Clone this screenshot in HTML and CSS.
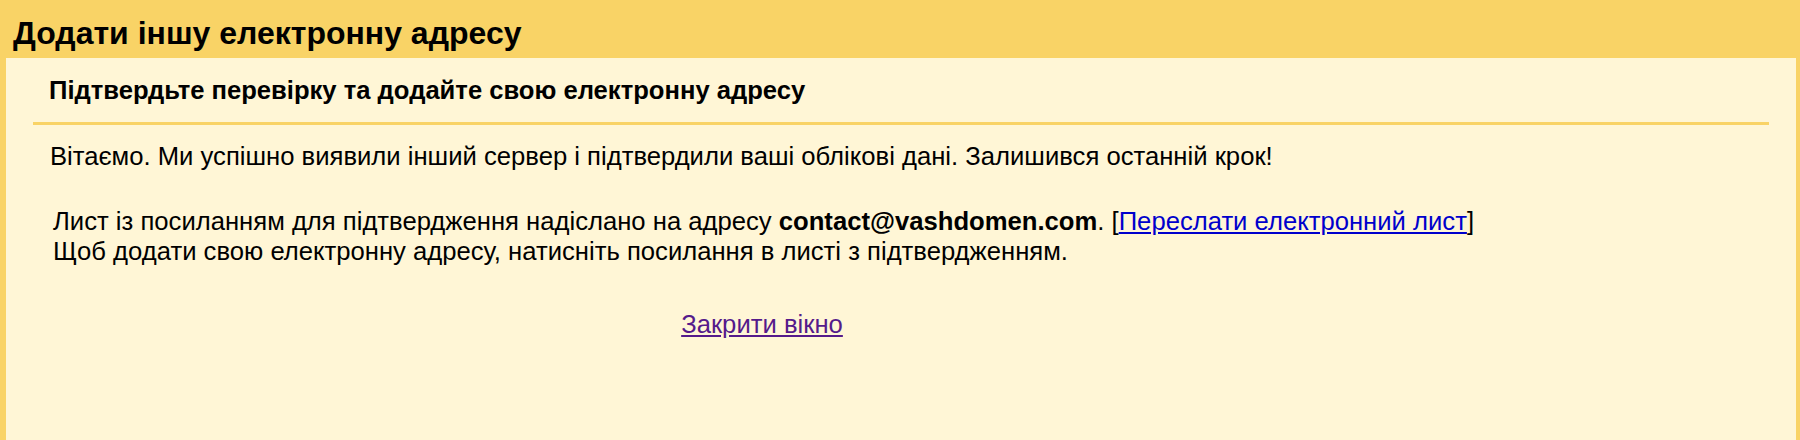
FILE: index.html
```html
<!DOCTYPE html>
<html lang="uk">
<head>
<meta charset="utf-8">
<title>Додати іншу електронну адресу</title>
<link rel="stylesheet" href="styles.css">
</head>
<body>
<div class="header">
  <h1 class="title">Додати іншу електронну адресу</h1>
</div>
<div class="panel">
  <h2 class="subtitle">Підтвердьте перевірку та додайте свою електронну адресу</h2>
  <div class="separator"></div>
  <div class="content">
    <p class="intro">Вітаємо. Ми успішно виявили інший сервер і підтвердили ваші облікові дані. Залишився останній крок!</p>
    <p class="details">Лист із посиланням для підтвердження надіслано на адресу <b>contact@vashdomen.com</b>. [<a class="resend" href="#">Переслати електронний лист</a>]<br>Щоб додати свою електронну адресу, натисніть посилання в листі з підтвердженням.</p>
    <div class="close-row"><a class="close" href="#">Закрити вікно</a></div>
  </div>
</div>
</body>
</html>
```

FILE: styles.css
```css
html, body {
  margin: 0;
  padding: 0;
}
body {
  background: #f9d366;
  font-family: "Liberation Sans", Arial, sans-serif;
  color: #000;
  width: 1800px;
  height: 440px;
  overflow: hidden;
  display: flex;
  flex-direction: column;
}
.header {
  height: 58px;
  box-sizing: border-box;
  padding: 13px 0 0 13px;
}
.title {
  margin: 0;
  font-size: 32px;
  line-height: 40px;
  font-weight: bold;
}
.panel {
  flex: 1;
  margin: 0 4px 0 6px;
  background: #fff6d6;
  padding-top: 18px;
}
.subtitle {
  margin: 0 0 18px 43px;
  font-size: 25.6px;
  line-height: 28px;
  font-weight: bold;
}
.separator {
  height: 3px;
  background: #f9d366;
  margin: 0 27px;
}
.content {
  width: fit-content;
  margin: 17px 0 0 44px;
  font-size: 25.65px;
}
.intro {
  margin: 0;
  line-height: 28px;
}
.details {
  margin: 36px 0 0 3px;
  line-height: 30px;
}
.resend {
  color: #0000cc;
}
.close-row {
  margin-top: 44px;
  text-align: center;
  line-height: 28px;
}
.close {
  color: #551a8b;
}
```
